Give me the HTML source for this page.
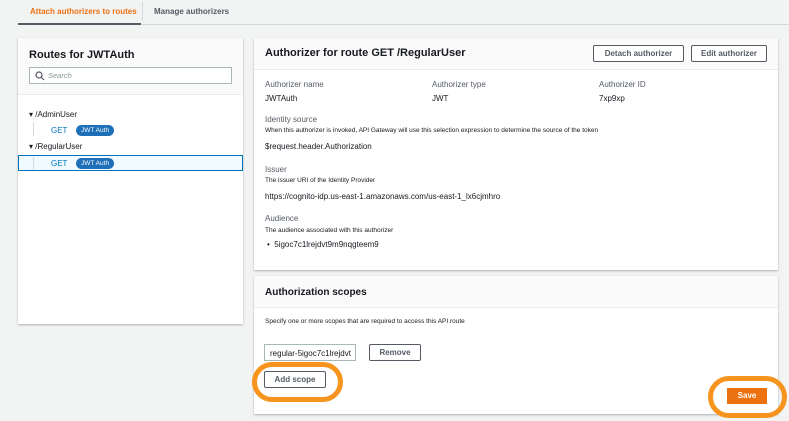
<!DOCTYPE html>
<html><head><meta charset="utf-8"><style>
*{box-sizing:border-box;margin:0;padding:0}
body{width:789px;height:421px;background:#f2f3f3;font-family:"Liberation Sans",sans-serif;color:#16191f;position:relative;overflow:hidden;font-size:8px}
.a{position:absolute;white-space:nowrap}
.panel{position:absolute;background:#fff;box-shadow:0 1px 2px rgba(0,28,36,.3)}
.hdr{position:absolute;left:0;right:0;top:0;background:#fafafa;border-bottom:1px solid #eaeded}
.btn{position:absolute;border:1px solid #545b64;background:#fff;font-weight:bold;font-size:8px;color:#545b64;text-align:center;border-radius:2px}
.lbl{color:#545b64;font-size:8px}
.d{font-size:6.5px;color:#16191f}
.v{font-size:8px}
.badge{position:absolute;background:#1d6fb8;color:#fff;border-radius:8px;font-size:6.5px;padding:1px 5px;line-height:9px}
.get{color:#0073bb;font-size:8px}
.ring{position:absolute;border:5px solid #f7941d;border-radius:22px}
</style></head><body>
<div class="a" style="left:30px;top:7px;color:#ec7211;font-weight:bold;font-size:8px">Attach authorizers to routes</div>
<div class="a" style="left:142px;top:2px;width:1px;height:18px;background:#d5dbdb"></div>
<div class="a" style="left:154px;top:7px;color:#545b64;font-weight:bold;font-size:8px">Manage authorizers</div>
<div class="a" style="left:141px;top:24px;width:648px;height:1px;background:#d5dbdb"></div>
<div class="a" style="left:18px;top:23px;width:123px;height:2px;background:#545b64"></div>

<div class="panel" style="left:18px;top:38px;width:225px;height:286px">
 <div class="hdr" style="height:57px"></div>
 <div class="a" style="left:11px;top:11px;font-weight:bold;font-size:11px">Routes for JWTAuth</div>
 <div class="a" style="left:11px;top:29px;width:203px;height:17px;border:1px solid #aab7b8;background:#fff">
  <svg class="a" style="left:5px;top:3px" width="10" height="10" viewBox="0 0 10 10"><circle cx="4" cy="4" r="3" fill="none" stroke="#545b64" stroke-width="1.2"/><path d="M6.3 6.3L9 9" stroke="#545b64" stroke-width="1.2"/></svg>
  <div class="a" style="left:18px;top:3px;font-style:italic;color:#879596;font-size:7.5px">Search</div>
 </div>
 <div class="a" style="left:11px;top:72px;font-size:8px">▾ /AdminUser</div>
 <div class="a" style="left:15px;top:84px;width:1px;height:14px;background:#d5dbdb"></div>
 <div class="a get" style="left:33px;top:88px">GET</div>
 <div class="badge" style="left:58px;top:87px">JWT Auth</div>
 <div class="a" style="left:11px;top:104px;font-size:8px">▾ /RegularUser</div>
 <div class="a" style="left:0;top:117px;width:225px;height:16px;background:#f1faff;border:1px solid #0073bb"></div>
 <div class="a" style="left:15px;top:119px;width:1px;height:13px;background:#d5dbdb"></div>
 <div class="a get" style="left:33px;top:121px">GET</div>
 <div class="badge" style="left:58px;top:120px">JWT Auth</div>
</div>

<div class="panel" style="left:254px;top:38px;width:524px;height:232px">
 <div class="hdr" style="height:32px"></div>
 <div class="a" style="left:11px;top:9px;font-weight:bold;font-size:11px">Authorizer for route GET /RegularUser</div>
 <div class="btn" style="left:339px;top:7px;width:91px;height:17px;line-height:15px">Detach authorizer</div>
 <div class="btn" style="left:437px;top:7px;width:76px;height:17px;line-height:15px">Edit authorizer</div>
 <div class="a lbl" style="left:11px;top:42px">Authorizer name</div>
 <div class="a lbl" style="left:178px;top:42px">Authorizer type</div>
 <div class="a lbl" style="left:345px;top:42px">Authorizer ID</div>
 <div class="a v" style="left:11px;top:56px">JWTAuth</div>
 <div class="a v" style="left:178px;top:56px">JWT</div>
 <div class="a v" style="left:345px;top:56px">7xp9xp</div>
 <div class="a lbl" style="left:11px;top:77px">Identity source</div>
 <div class="a d" style="left:11px;top:89px">When this authorizer is invoked, API Gateway will use this selection expression to determine the source of the token</div>
 <div class="a v" style="left:11px;top:104px">$request.header.Authorization</div>
 <div class="a lbl" style="left:11px;top:127px">Issuer</div>
 <div class="a d" style="left:11px;top:139px">The issuer URI of the Identity Provider</div>
 <div class="a v" style="left:11px;top:154px">https://cognito-idp.us-east-1.amazonaws.com/us-east-1_lx6cjmhro</div>
 <div class="a lbl" style="left:11px;top:176px">Audience</div>
 <div class="a d" style="left:11px;top:189px">The audience associated with this authorizer</div>
 <div class="a v" style="left:13px;top:202px">•&nbsp; 5igoc7c1lrejdvt9m9nqgteem9</div>
</div>

<div class="panel" style="left:254px;top:276px;width:524px;height:138px">
 <div class="hdr" style="height:32px"></div>
 <div class="a" style="left:11px;top:11px;font-weight:bold;font-size:10px">Authorization scopes</div>
 <div class="a d" style="left:11px;top:42px">Specify one or more scopes that are required to access this API route</div>
 <div class="a" style="left:10px;top:68px;width:92px;height:17px;border:1px solid #aab7b8;font-size:8px;padding:4px 5px;overflow:hidden">regular-5igoc7c1lrejdvt</div>
 <div class="btn" style="left:115px;top:68px;width:52px;height:17px;line-height:15px">Remove</div>
 <div class="btn" style="left:10px;top:95px;width:62px;height:17px;line-height:15px">Add scope</div>
 <div class="a" style="left:473px;top:112px;width:40px;height:16px;background:#ec7211;color:#fff;font-weight:bold;text-align:center;line-height:16px">Save</div>
</div>
<div class="ring" style="left:252px;top:362px;width:91px;height:40px"></div>
<div class="ring" style="left:708px;top:376px;width:79px;height:42px"></div>
</body></html>
